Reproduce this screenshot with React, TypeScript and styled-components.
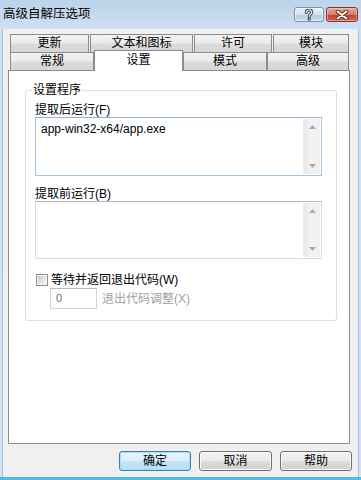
import React from "react";
import styled, { createGlobalStyle, css } from "styled-components";

const Global = createGlobalStyle`
  html, body { margin: 0; padding: 0; background: #f0f0f0; }
  body { font-family: "Liberation Sans", "Noto Sans CJK SC", sans-serif; font-size: 12px; color: #000; }
  * { box-sizing: border-box; }
`;

const Window = styled.div`
  width: 361px;
  height: 480px;
  display: flex;
  flex-direction: column;
  background: linear-gradient(#bcd3ea, #cfe0f1 30px, #d3e3f2);
  border-bottom: 3px solid #4cbbe8;
  overflow: hidden;
`;

const TitleBar = styled.div`
  height: 29px;
  display: flex;
  align-items: flex-start;
  justify-content: space-between;
  padding: 0 3px 0 2px;
`;

const Title = styled.div`
  font-size: 12.5px;
  line-height: 29px;
  color: #000;
  padding-left: 1px;
`;

const Caption = styled.div`
  display: flex;
  gap: 2px;
  margin-top: 7px;
`;

const CapBtn = styled.div<{ $w: number; $kind: "help" | "close" }>`
  width: ${(p) => p.$w}px;
  height: 15px;
  border-radius: 3px;
  display: flex;
  align-items: center;
  justify-content: center;
  ${(p) =>
    p.$kind === "help"
      ? css`
          border: 1px solid #7d90a6;
          background: linear-gradient(#e9f0f8, #d3e0ee 50%, #b9cde2 51%, #c9dbec);
          box-shadow: inset 0 0 0 1px rgba(255, 255, 255, 0.6);
        `
      : css`
          border: 1px solid #7b3a30;
          background: linear-gradient(#e6a99e, #d57a6b 50%, #c2412d 51%, #d0644f);
          box-shadow: inset 0 0 0 1px rgba(255, 220, 210, 0.5);
        `}
`;

const Body = styled.div`
  flex: 1;
  margin: 0 2px;
  background: #f0f0f0;
  border-left: 1px solid #a9c1d8;
  border-right: 1px solid #a9c1d8;
  display: flex;
  flex-direction: column;
  padding-top: 5px;
`;

const TabArea = styled.div`
  margin-left: 7px;
  display: flex;
  flex-direction: column;
`;

const TabRow = styled.div<{ $gap: number }>`
  display: flex;
  height: 18px;
  gap: ${(p) => p.$gap}px;
`;

const Tab = styled.div<{ $w: number; $active?: boolean }>`
  width: ${(p) => p.$w}px;
  height: 18px;
  border: 1px solid #898c95;
  border-bottom: none;
  background: linear-gradient(#f3f3f3, #ebebeb 45%, #dcdcdc 55%, #d6d6d6);
  text-align: center;
  font-size: 12px;
  line-height: 17px;
  ${(p) =>
    p.$active &&
    css`
      position: relative;
      z-index: 1;
      height: 21px;
      margin-top: -2px;
      margin-bottom: -1px;
      background: #fff;
      line-height: 18px;
    `}
`;

const Panel = styled.div`
  margin: 0 8px 0 5px;
  height: 374px;
  background: #fff;
  border: 1px solid #898c95;
  padding: 11px 12px 0 16px;
`;

const Group = styled.fieldset`
  margin: 0;
  padding: 0;
  height: 239px;
  border: 1px solid #d5dfe5;
  border-radius: 3px;
  min-width: 0;
`;

const Legend = styled.legend`
  margin-left: 6px;
  padding: 0 1px;
  font-size: 12px;
  line-height: 16px;
`;

const GroupInner = styled.div`
  padding: 0 14px 0 9px;
  display: flex;
  flex-direction: column;
`;

const FieldLabel = styled.div<{ $mt: number }>`
  font-size: 12px;
  line-height: 14px;
  margin-top: ${(p) => p.$mt}px;
`;

const TextBox = styled.div<{ $focused?: boolean; $h: number }>`
  height: ${(p) => p.$h}px;
  display: flex;
  border: 1px solid ${(p) => (p.$focused ? "#a6c4e2" : "#d9dde3")};
  border-top-color: ${(p) => (p.$focused ? "#8fb2d6" : "#b4b8bf")};
  background: #fff;
`;

const TextContent = styled.div`
  flex: 1;
  padding: 4px 0 0 5px;
  font-size: 12px;
  line-height: 14px;
`;

const Scrollbar = styled.div`
  width: 17px;
  margin: 1px 1px 1px 0;
  background: linear-gradient(90deg, #e8e8e8, #f2f2f2 40%, #f0f0f0);
  border-left: 1px solid #ececec;
  display: flex;
  flex-direction: column;
  justify-content: space-between;
  align-items: center;
  padding: 6px 0 6px;
`;

const CheckRow = styled.div`
  display: flex;
  align-items: center;
  gap: 3px;
  margin-top: 14px;
  margin-left: 1px;
  height: 14px;
`;

const CheckBox = styled.span`
  width: 12px;
  height: 12px;
  border: 1px solid #8f8f8f;
  background: linear-gradient(135deg, #c4c4c4, #e6e6e6 60%, #f4f4f4);
  box-shadow: inset 0 0 0 1px #f6f6f6;
`;

const CheckLabel = styled.span`
  font-size: 12px;
  line-height: 14px;
`;

const NumberRow = styled.div`
  display: flex;
  align-items: center;
  gap: 5px;
  margin-top: 1px;
  margin-left: 15px;
`;

const NumberBox = styled.div`
  width: 47px;
  height: 21px;
  border: 1px solid #d0d3d8;
  border-top-color: #b9bdc3;
  background: #fff;
  color: #6d6d6d;
  font-size: 11px;
  line-height: 19px;
  padding-left: 5px;
`;

const DisabledLabel = styled.span`
  color: #a0a0a0;
  font-size: 12px;
  line-height: 14px;
`;

const ButtonRow = styled.div`
  display: flex;
  justify-content: flex-end;
  gap: 8px;
  margin-top: 7px;
  padding-right: 6px;
`;

const Button = styled.div<{ $w: number; $default?: boolean }>`
  width: ${(p) => p.$w}px;
  height: 20px;
  border-radius: 3px;
  text-align: center;
  font-size: 12px;
  line-height: 18px;
  ${(p) =>
    p.$default
      ? css`
          border: 1px solid #3c7fb1;
          background: linear-gradient(#e8f4fc, #d9eefb 50%, #c4e4f8 51%, #b7ddf6);
          box-shadow: inset 0 0 0 1px #a8dcf7;
        `
      : css`
          border: 1px solid #707070;
          background: linear-gradient(#f2f2f2, #ebebeb 50%, #dddddd 51%, #cfcfcf);
          box-shadow: inset 0 0 0 1px #fcfcfc;
        `}
`;

const ArrowUp = () => (
  <svg width="7" height="4" viewBox="0 0 7 4">
    <path d="M0 4 L3.5 0 L7 4 Z" fill="#a8a8a8" />
  </svg>
);
const ArrowDown = () => (
  <svg width="7" height="4" viewBox="0 0 7 4">
    <path d="M0 0 L3.5 4 L7 0 Z" fill="#a8a8a8" />
  </svg>
);

const HelpIcon = () => (
  <svg width="10" height="12" viewBox="0 0 10 12">
    <path
      d="M2.2 3.6 C2.2 1.8 3.5 1 5 1 C6.7 1 7.8 2 7.8 3.4 C7.8 5.2 5.2 5.4 5.2 7.4"
      fill="none"
      stroke="#2f4258"
      strokeWidth="3"
      strokeLinecap="round"
    />
    <circle cx="5.2" cy="10.2" r="1.6" fill="#2f4258" />
    <path
      d="M2.2 3.6 C2.2 1.8 3.5 1 5 1 C6.7 1 7.8 2 7.8 3.4 C7.8 5.2 5.2 5.4 5.2 7.4"
      fill="none"
      stroke="#eef3f8"
      strokeWidth="1.2"
      strokeLinecap="round"
    />
    <circle cx="5.2" cy="10.2" r="0.7" fill="#eef3f8" />
  </svg>
);

const CloseIcon = () => (
  <svg width="14" height="10" viewBox="0 0 14 10">
    <path d="M2.5 1.5 L11.5 8.5 M11.5 1.5 L2.5 8.5" stroke="#5a1e16" strokeWidth="3.6" strokeLinecap="round" />
    <path d="M2.5 1.5 L11.5 8.5 M11.5 1.5 L2.5 8.5" stroke="#ffffff" strokeWidth="2" strokeLinecap="round" />
  </svg>
);

const row1 = [
  { label: "更新", w: 79 },
  { label: "文本和图标", w: 103 },
  { label: "许可", w: 78 },
  { label: "模块", w: 76 },
];
const row2 = [
  { label: "常规", w: 84 },
  { label: "设置", w: 89, active: true },
  { label: "模式", w: 84 },
  { label: "高级", w: 82 },
];

export default function App() {
  return (
    <>
      <Global />
      <Window>
        <TitleBar>
          <Title>高级自解压选项</Title>
          <Caption>
            <CapBtn $w={30} $kind="help">
              <HelpIcon />
            </CapBtn>
            <CapBtn $w={32} $kind="close">
              <CloseIcon />
            </CapBtn>
          </Caption>
        </TitleBar>
        <Body>
          <TabArea>
            <TabRow $gap={1}>
              {row1.map((t) => (
                <Tab key={t.label} $w={t.w}>
                  {t.label}
                </Tab>
              ))}
            </TabRow>
            <TabRow $gap={0}>
              {row2.map((t) => (
                <Tab key={t.label} $w={t.w} $active={t.active}>
                  {t.label}
                </Tab>
              ))}
            </TabRow>
          </TabArea>
          <Panel>
            <Group>
              <Legend>设置程序</Legend>
              <GroupInner>
                <FieldLabel $mt={5}>提取后运行(F)</FieldLabel>
                <TextBox $focused $h={59}>
                  <TextContent>app-win32-x64/app.exe</TextContent>
                  <Scrollbar>
                    <ArrowUp />
                    <ArrowDown />
                  </Scrollbar>
                </TextBox>
                <FieldLabel $mt={11}>提取前运行(B)</FieldLabel>
                <TextBox $h={58}>
                  <TextContent />
                  <Scrollbar>
                    <ArrowUp />
                    <ArrowDown />
                  </Scrollbar>
                </TextBox>
                <CheckRow>
                  <CheckBox />
                  <CheckLabel>等待并返回退出代码(W)</CheckLabel>
                </CheckRow>
                <NumberRow>
                  <NumberBox>0</NumberBox>
                  <DisabledLabel>退出代码调整(X)</DisabledLabel>
                </NumberRow>
              </GroupInner>
            </Group>
          </Panel>
          <ButtonRow>
            <Button $w={72} $default>
              确定
            </Button>
            <Button $w={73}>取消</Button>
            <Button $w={72}>帮助</Button>
          </ButtonRow>
        </Body>
      </Window>
    </>
  );
}
